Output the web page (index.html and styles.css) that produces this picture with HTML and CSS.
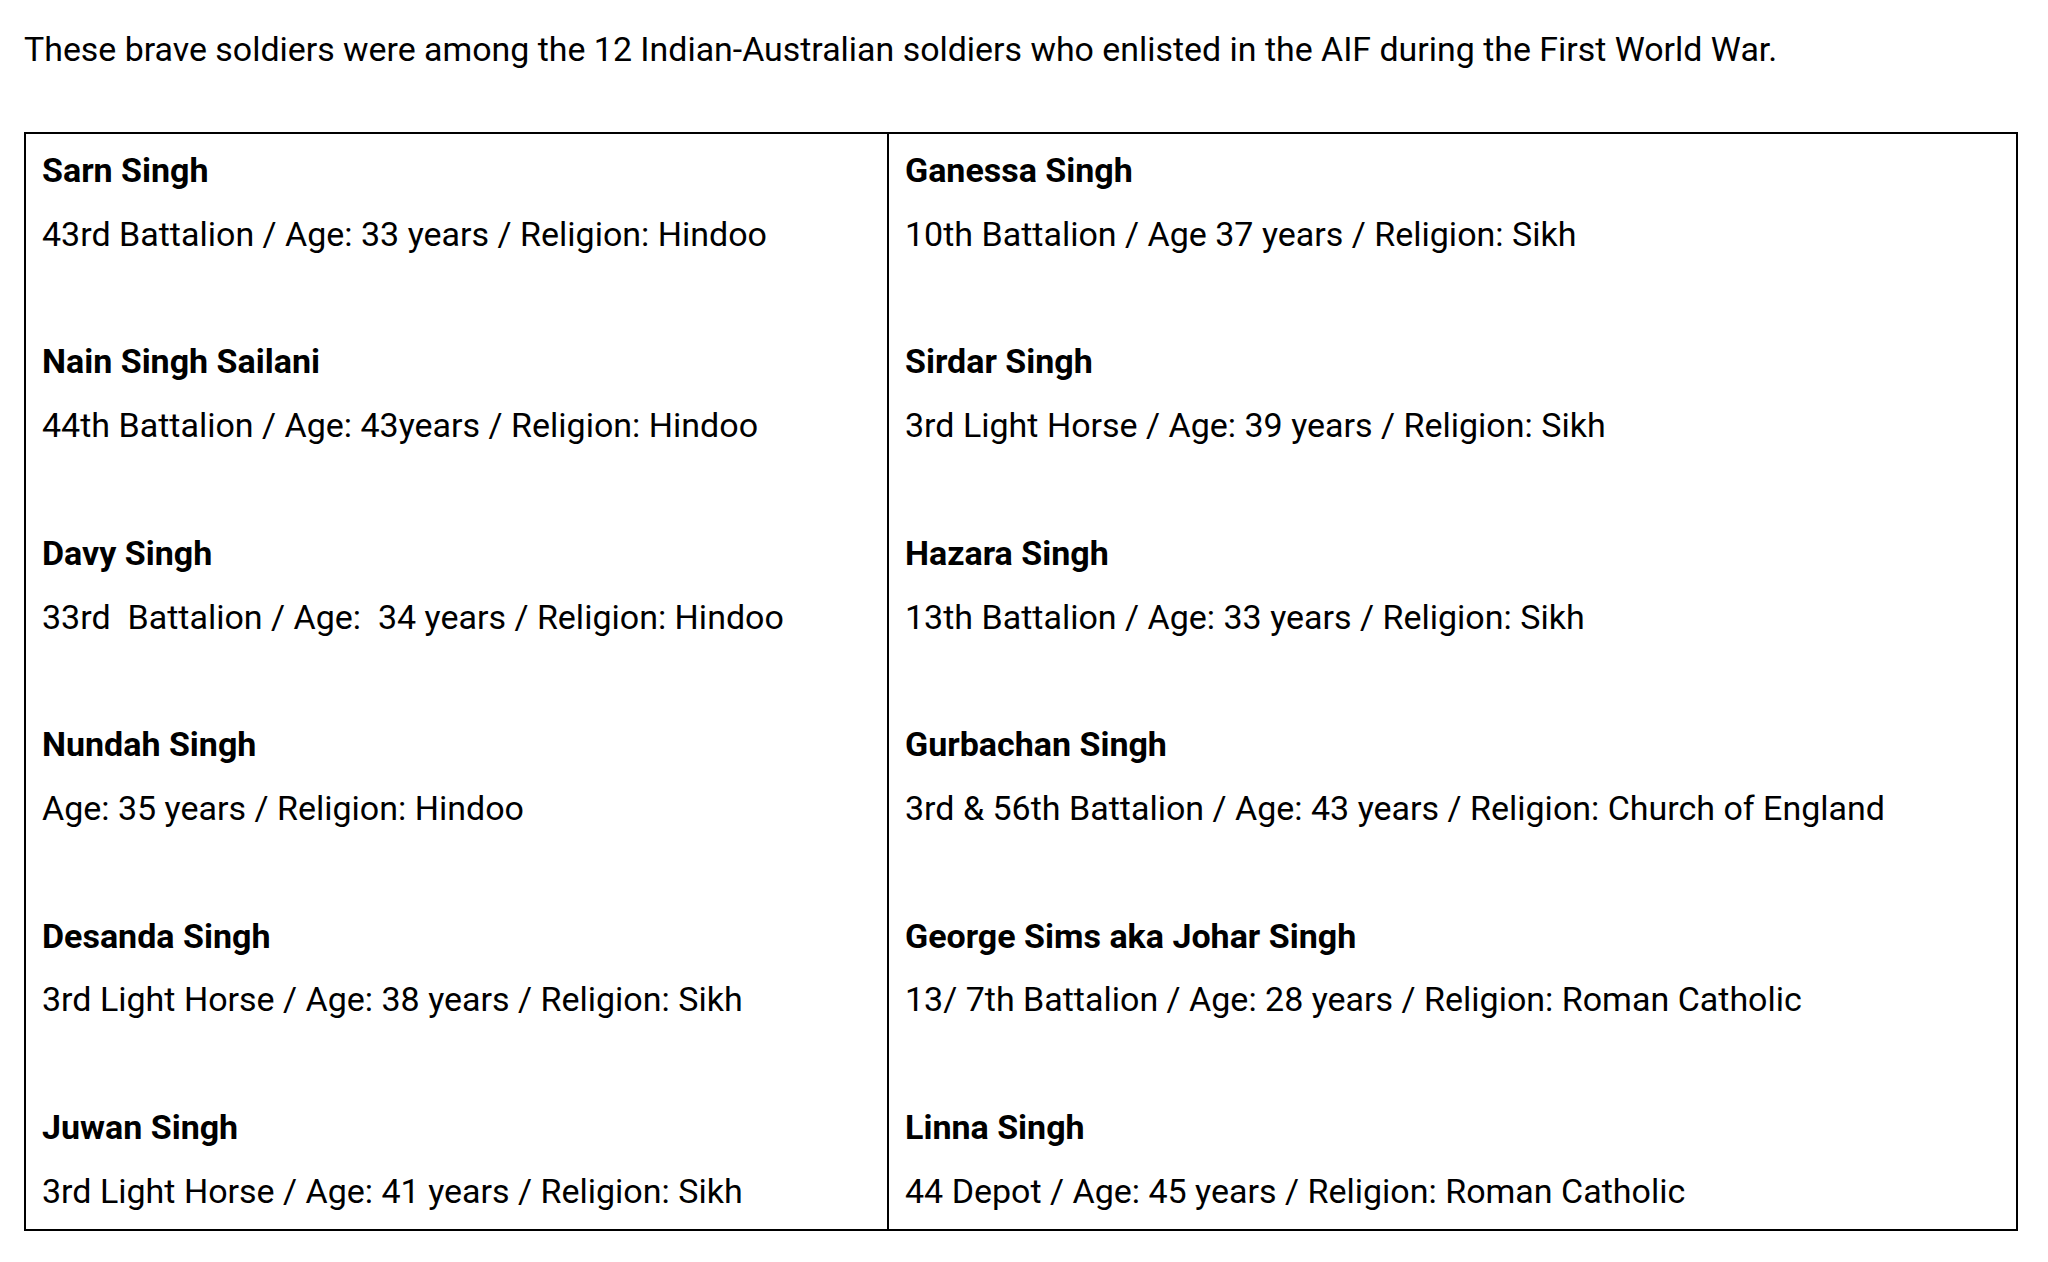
FILE: index.html
```html
<!DOCTYPE html>
<html>
<head>
<meta charset="utf-8">
<link rel="stylesheet" href="styles.css">
</head>
<body>
<p class="intro">These brave soldiers were among the 12 Indian-Australian soldiers who enlisted in the AIF during the First World War.</p>
<table class="soldiers">
<tr>
<td class="col col-left">
<p class="name">Sarn Singh</p>
<p class="detail">43rd Battalion / Age: 33 years / Religion: Hindoo</p>
<p class="blank">&nbsp;</p>
<p class="name">Nain Singh Sailani</p>
<p class="detail">44th Battalion / Age: 43years / Religion: Hindoo</p>
<p class="blank">&nbsp;</p>
<p class="name">Davy Singh</p>
<p class="detail">33rd&nbsp; Battalion / Age:&nbsp; 34 years / Religion: Hindoo</p>
<p class="blank">&nbsp;</p>
<p class="name">Nundah Singh</p>
<p class="detail">Age: 35 years / Religion: Hindoo</p>
<p class="blank">&nbsp;</p>
<p class="name">Desanda Singh</p>
<p class="detail">3rd Light Horse / Age: 38 years / Religion: Sikh</p>
<p class="blank">&nbsp;</p>
<p class="name">Juwan Singh</p>
<p class="detail">3rd Light Horse / Age: 41 years / Religion: Sikh</p>
</td>
<td class="col col-right">
<p class="name">Ganessa Singh</p>
<p class="detail">10th Battalion / Age 37 years / Religion: Sikh</p>
<p class="blank">&nbsp;</p>
<p class="name">Sirdar Singh</p>
<p class="detail">3rd Light Horse / Age: 39 years / Religion: Sikh</p>
<p class="blank">&nbsp;</p>
<p class="name">Hazara Singh</p>
<p class="detail">13th Battalion / Age: 33 years / Religion: Sikh</p>
<p class="blank">&nbsp;</p>
<p class="name">Gurbachan Singh</p>
<p class="detail">3rd &amp; 56th Battalion / Age: 43 years / Religion: Church of England</p>
<p class="blank">&nbsp;</p>
<p class="name">George Sims aka Johar Singh</p>
<p class="detail">13/ 7th Battalion / Age: 28 years / Religion: Roman Catholic</p>
<p class="blank">&nbsp;</p>
<p class="name">Linna Singh</p>
<p class="detail">44 Depot / Age: 45 years / Religion: Roman Catholic</p>
</td>
</tr>
</table>
</body>
</html>
```
FILE: styles.css
```css
html, body {
  margin: 0;
  padding: 0;
  background: #ffffff;
}
body {
  font-family: Roboto, "Liberation Sans", sans-serif;
  color: #000000;
  font-size: 34px;
  padding: 18px 0 0 24px;
}
p {
  margin: 0;
}
.intro {
  font-size: 33.9px;
  line-height: 64px;
  margin-bottom: 50px;
}
.soldiers {
  border-collapse: collapse;
  width: 1994px;
}
.col {
  border: 2px solid #000;
  vertical-align: top;
  padding: 5px 16px 5px 16px;
}
.col-left {
  width: 829px;
}
.name, .detail, .blank {
  line-height: 63.8px;
}
.name {
  font-weight: 700;
}
```
